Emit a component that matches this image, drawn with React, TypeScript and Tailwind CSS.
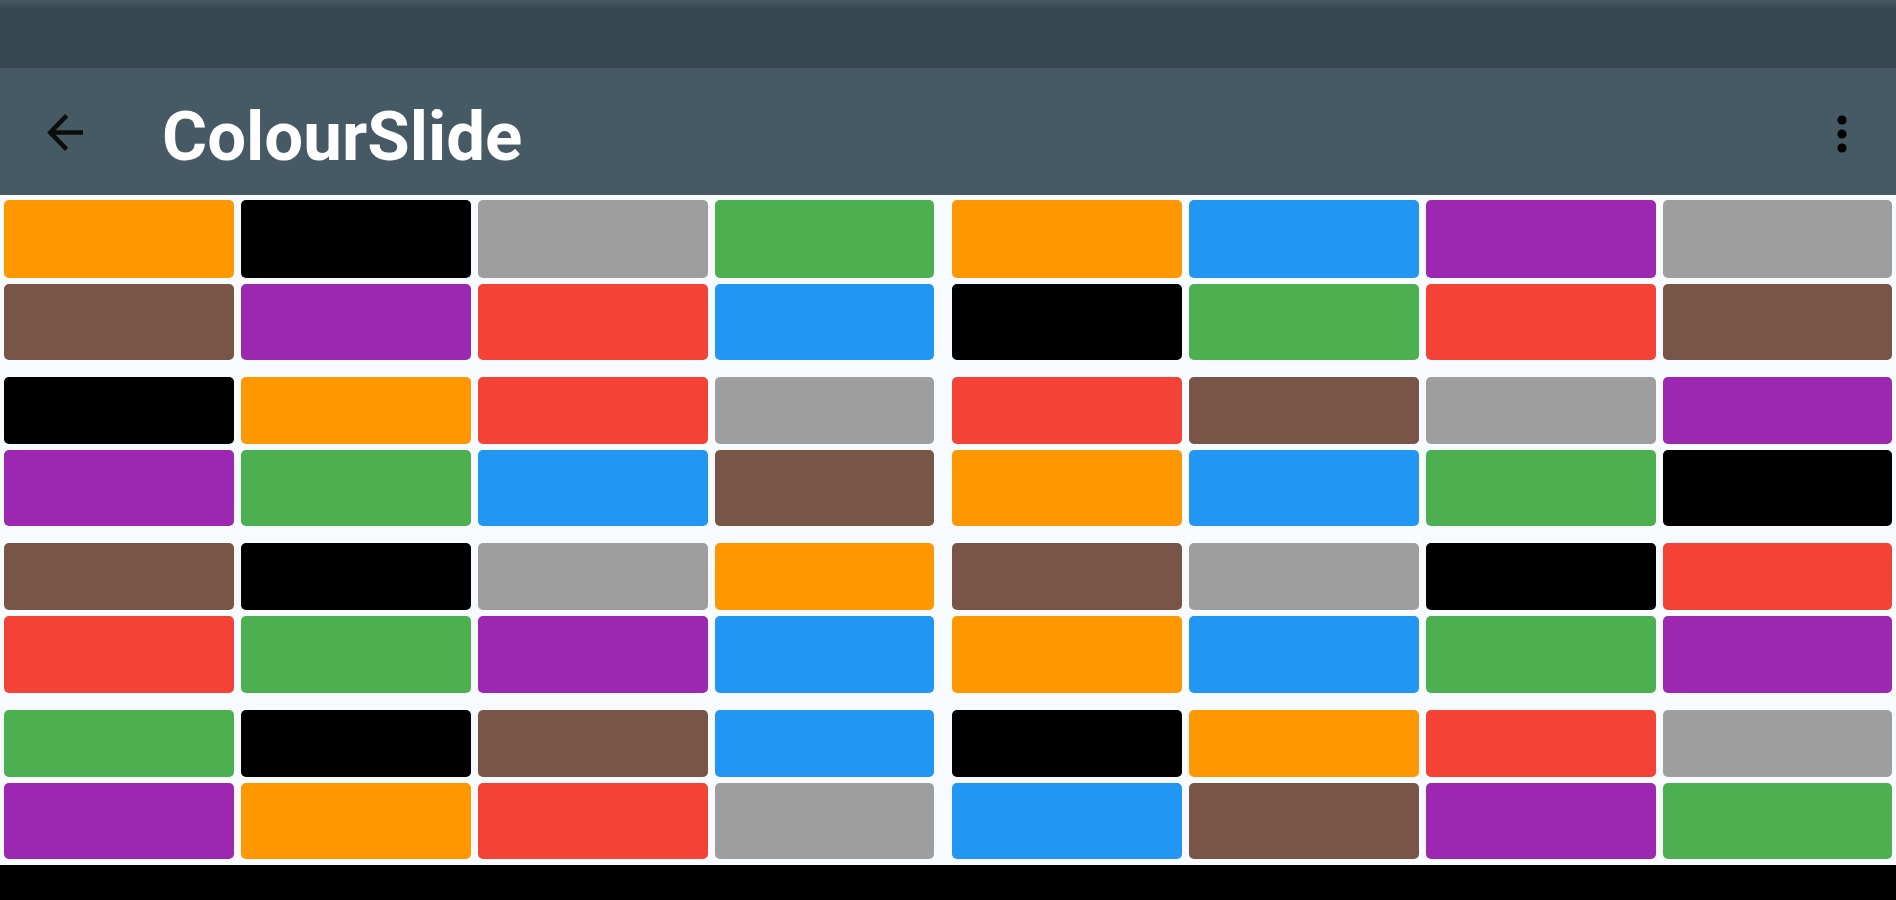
import { FC } from 'react';

const C: Record<string, string> = {
  o: 'bg-[#ff9800]',
  k: 'bg-[#000000]',
  g: 'bg-[#9e9e9e]',
  n: 'bg-[#4caf50]',
  b: 'bg-[#795548]',
  p: 'bg-[#9c27b0]',
  r: 'bg-[#f44336]',
  u: 'bg-[#2196f3]',
};

// each row: left half | right half
const rows: string[][] = [
  ['okgn', 'oupg'],
  ['bpru', 'knrb'],
  ['korg', 'rbgp'],
  ['pnub', 'ounk'],
  ['bkgo', 'bgkr'],
  ['rnpu', 'ounp'],
  ['nkbu', 'korg'],
  ['porg', 'ubpn'],
];

const heights = [
  'h-[78px]',
  'h-[76px]',
  'h-[67px]',
  'h-[76px]',
  'h-[67px]',
  'h-[77px]',
  'h-[67px]',
  'h-[76px]',
];

const leftW = ['w-[230px]', 'w-[230px]', 'w-[230px]', 'w-[219px]'];
const rightW = ['w-[230px]', 'w-[230px]', 'w-[230px]', 'w-[229px]'];

const Row: FC<{ idx: number }> = ({ idx }) => {
  const [l, r] = rows[idx];
  return (
    <div className={`flex gap-[18px] ${heights[idx]}`}>
      <div className="flex gap-[7px]">
        {l.split('').map((c, i) => (
          <div key={i} className={`${leftW[i]} h-full rounded-[5px] ${C[c]}`} />
        ))}
      </div>
      <div className="flex gap-[7px]">
        {r.split('').map((c, i) => (
          <div key={i} className={`${rightW[i]} h-full rounded-[5px] ${C[c]}`} />
        ))}
      </div>
    </div>
  );
};

const App: FC = () => {
  return (
    <div
      className="w-[1896px] h-[900px] overflow-hidden flex flex-col bg-white"
      style={{ fontFamily: 'Roboto, "Noto Sans", sans-serif' }}
    >
      <div className="h-[68px] shrink-0 bg-linear-to-b from-[#46585f] via-[#37474f] via-[14%] to-[#37474f]" />
      <div className="h-[127px] shrink-0 bg-[#455a64] flex items-center relative">
        <svg
          className="ml-[47px] translate-y-[1px]"
          width="36"
          height="37"
          viewBox="4 4 16 16"
          preserveAspectRatio="none"
        >
          <path
            d="M20 11H7.83l5.59-5.59L12 4l-8 8 8 8 1.41-1.41L7.83 13H20v-2z"
            fill="#0d0d0d"
          />
        </svg>
        <span className="ml-[79px] text-[69px] font-bold text-white leading-none translate-y-[5px]">
          ColourSlide
        </span>
        <svg
          className="absolute left-[1837px] top-[47px]"
          width="10"
          height="38"
          viewBox="0 0 10 38"
        >
          <circle cx="5" cy="5" r="4.6" fill="#050505" />
          <circle cx="5" cy="19" r="4.6" fill="#050505" />
          <circle cx="5" cy="33" r="4.6" fill="#050505" />
        </svg>
      </div>
      <div className="flex flex-col px-[4px] pt-[5px] pb-[6px] gap-[17px] bg-[#f8fbfd]">
        {[0, 1, 2, 3].map((g) => (
          <div key={g} className="flex flex-col gap-[6px]">
            <Row idx={g * 2} />
            <Row idx={g * 2 + 1} />
          </div>
        ))}
      </div>
      <div className="flex-1 bg-black" />
    </div>
  );
};

export default App;
